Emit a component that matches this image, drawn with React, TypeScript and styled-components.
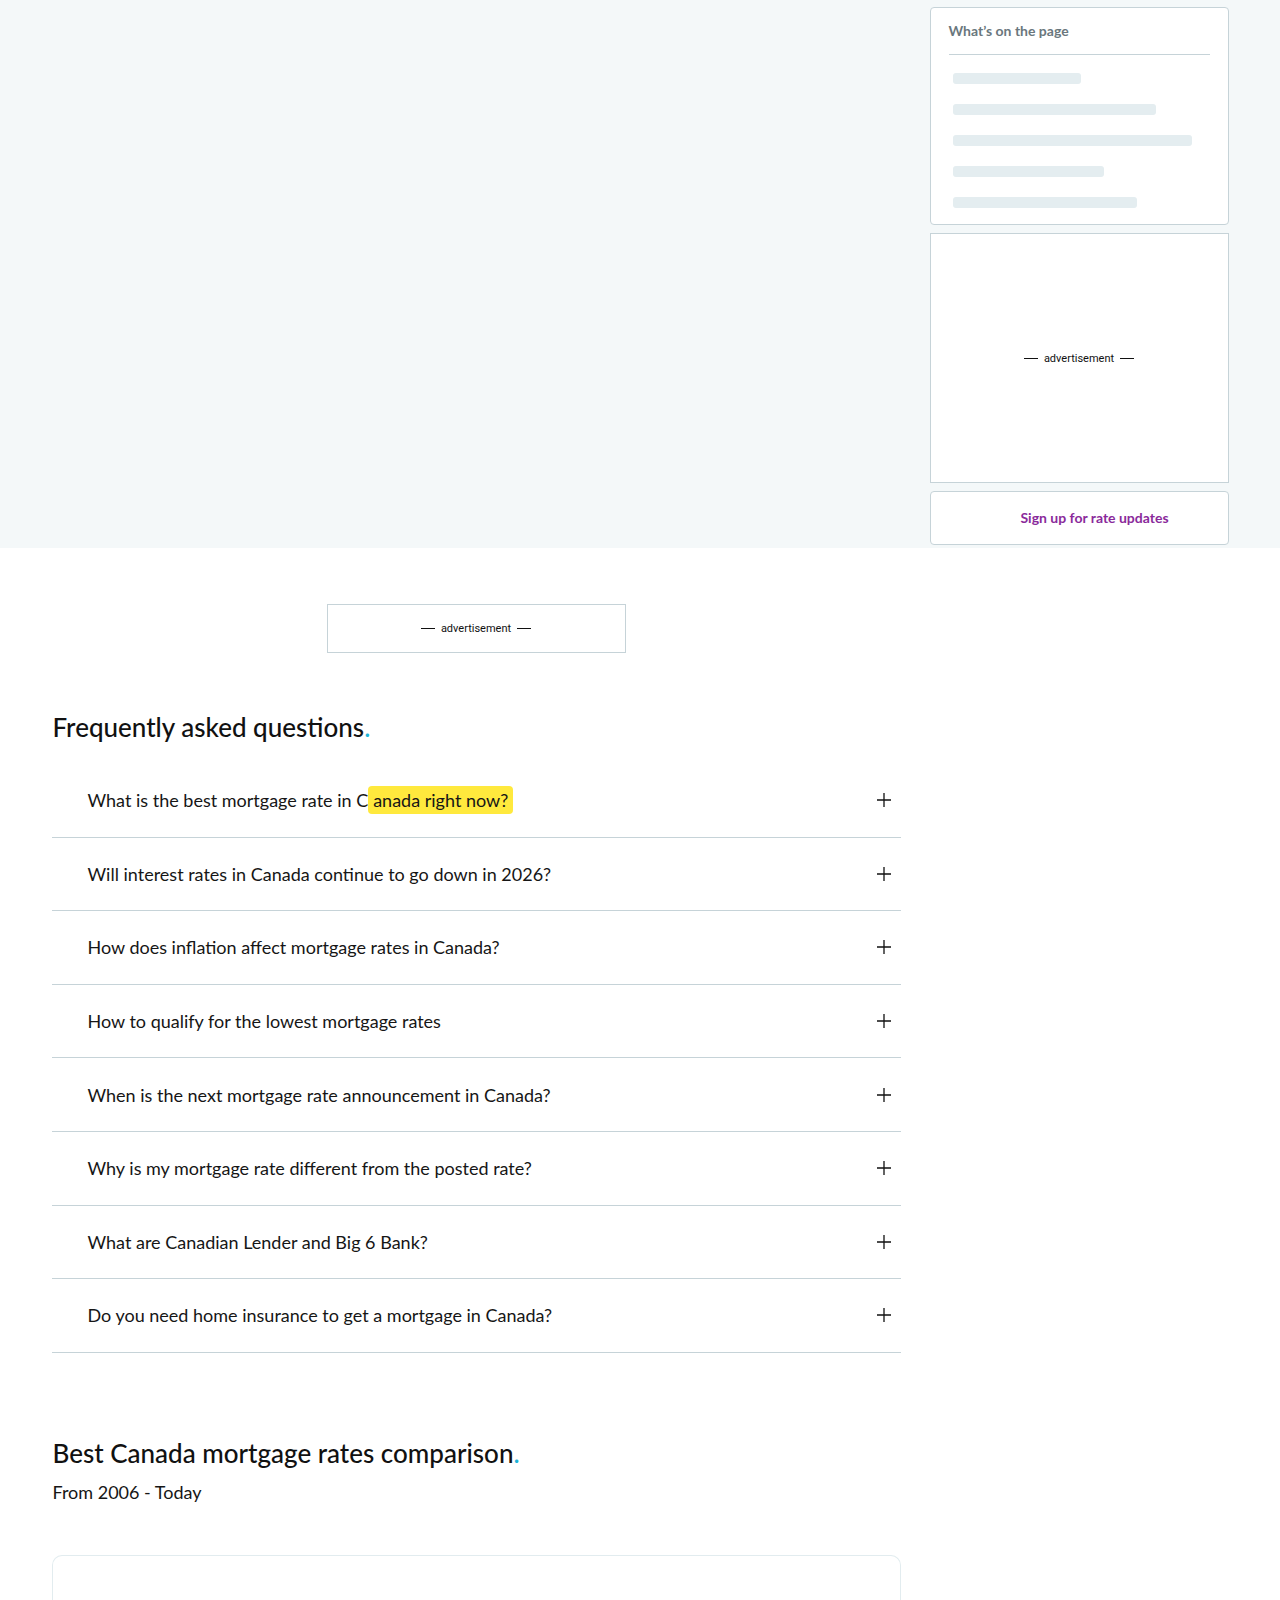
import styled, { createGlobalStyle } from "styled-components";

const GlobalStyle = createGlobalStyle`
  * { box-sizing: border-box; }
  body {
    margin: 0;
    background: #ffffff;
    font-family: "Lato", "Liberation Sans", sans-serif;
    color: #161616;
  }
`;

const faqs = [
  "What is the best mortgage rate in Canada right now?",
  "Will interest rates in Canada continue to go down in 2026?",
  "How does inflation affect mortgage rates in Canada?",
  "How to qualify for the lowest mortgage rates",
  "When is the next mortgage rate announcement in Canada?",
  "Why is my mortgage rate different from the posted rate?",
  "What are Canadian Lender and Big 6 Bank?",
  "Do you need home insurance to get a mortgage in Canada?",
];

const tocBars = [128, 203, 239, 151, 184];

const TopBand = styled.section`
  background: #f4f8f9;
  padding: 7px 0 3px;
`;

const Layout = styled.div`
  width: 1177px;
  margin: 0 auto;
  display: grid;
  grid-template-columns: 849px 299px;
  column-gap: 29px;
`;

const Sidebar = styled.aside`
  grid-column: 2;
  display: flex;
  flex-direction: column;
  gap: 8px;
`;

const Card = styled.div`
  background: #ffffff;
  border: 1px solid #c6d3d8;
  border-radius: 4px;
`;

const TocCard = styled(Card)`
  height: 218px;
  padding: 14px 18px 0 18px;
`;

const TocTitle = styled.h3`
  margin: 0;
  font-size: 14px;
  font-weight: 700;
  color: #6a777d;
  padding-bottom: 15px;
  border-bottom: 1px solid #c6d3d8;
`;

const TocList = styled.div`
  display: flex;
  flex-direction: column;
  gap: 20px;
  padding: 18px 0 0 4px;
`;

const SkeletonBar = styled.div`
  height: 11px;
  border-radius: 3px;
  background: #e4edf0;
`;

const SideAd = styled(Card)`
  height: 250px;
  border-radius: 0;
  display: flex;
  align-items: center;
  justify-content: center;
`;

const AdLabel = styled.span`
  display: inline-flex;
  align-items: center;
  gap: 6px;
  font-family: "Roboto", "Liberation Sans", sans-serif;
  font-size: 11px;
  color: #111;
  &::before,
  &::after {
    content: "";
    width: 14px;
    height: 1px;
    background: #111;
  }
`;

const SignUpCard = styled(Card)`
  height: 54px;
  display: flex;
  align-items: center;
  justify-content: center;
  padding: 0 0 2px 31px;
`;

const SignUpLink = styled.a`
  font-size: 14px;
  font-weight: 700;
  color: #8a2a9b;
  text-decoration: none;
`;

const Main = styled.main`
  grid-column: 1;
  display: flex;
  flex-direction: column;
`;

const InlineAd = styled.div`
  align-self: center;
  width: 299px;
  height: 49px;
  margin-top: 56px;
  border: 1px solid #c6d3d8;
  display: flex;
  align-items: center;
  justify-content: center;
`;

const SectionTitle = styled.h2<{ $top: number }>`
  margin: ${({ $top }) => $top}px 0 0 1px;
  font-size: 26px;
  font-weight: 500;
  line-height: 32px;
  color: #111;
  span {
    color: #1db4d8;
  }
`;

const FaqList = styled.div`
  margin-top: 21px;
  display: flex;
  flex-direction: column;
`;

const FaqRow = styled.button`
  all: unset;
  box-sizing: border-box;
  height: 73.6px;
  display: flex;
  align-items: center;
  justify-content: space-between;
  padding: 0 10px 0 36px;
  border-bottom: 1px solid #c6d3d8;
  cursor: pointer;
`;

const Question = styled.span`
  font-size: 18px;
  color: #161616;
`;

const Highlight = styled.mark`
  background: #ffe93d;
  border-radius: 4px;
  padding: 3px 5px;
  color: inherit;
`;

const Subtitle = styled.p`
  margin: 12px 0 0 1px;
  font-size: 18px;
  color: #161616;
`;

const ChartCard = styled.div`
  margin-top: 52px;
  height: 60px;
  border: 1px solid #e2ecef;
  border-bottom: none;
  border-radius: 10px 10px 0 0;
`;

const PlusIcon = () => (
  <svg width="14" height="14" viewBox="0 0 14 14" fill="none" stroke="#111" strokeWidth="1.3">
    <path d="M7 0v14M0 7h14" />
  </svg>
);

const App = () => (
  <>
    <GlobalStyle />
    <TopBand>
      <Layout>
        <Sidebar>
          <TocCard>
            <TocTitle>What’s on the page</TocTitle>
            <TocList>
              {tocBars.map((w, i) => (
                <SkeletonBar key={i} style={{ width: w }} />
              ))}
            </TocList>
          </TocCard>
          <SideAd>
            <AdLabel>advertisement</AdLabel>
          </SideAd>
          <SignUpCard>
            <SignUpLink href="#">Sign up for rate updates</SignUpLink>
          </SignUpCard>
        </Sidebar>
      </Layout>
    </TopBand>
    <Layout>
      <Main>
        <InlineAd>
          <AdLabel>advertisement</AdLabel>
        </InlineAd>
        <SectionTitle $top={58}>
          Frequently asked questions<span>.</span>
        </SectionTitle>
        <FaqList>
          {faqs.map((q, i) => (
            <FaqRow key={q}>
              <Question>
                {i === 0 ? (
                  <>
                    What is the best mortgage rate in C<Highlight>anada right now?</Highlight>
                  </>
                ) : (
                  q
                )}
              </Question>
              <PlusIcon />
            </FaqRow>
          ))}
        </FaqList>
        <SectionTitle $top={84}>
          Best Canada mortgage rates comparison<span>.</span>
        </SectionTitle>
        <Subtitle>From 2006 - Today</Subtitle>
        <ChartCard />
      </Main>
    </Layout>
  </>
);

export default App;
